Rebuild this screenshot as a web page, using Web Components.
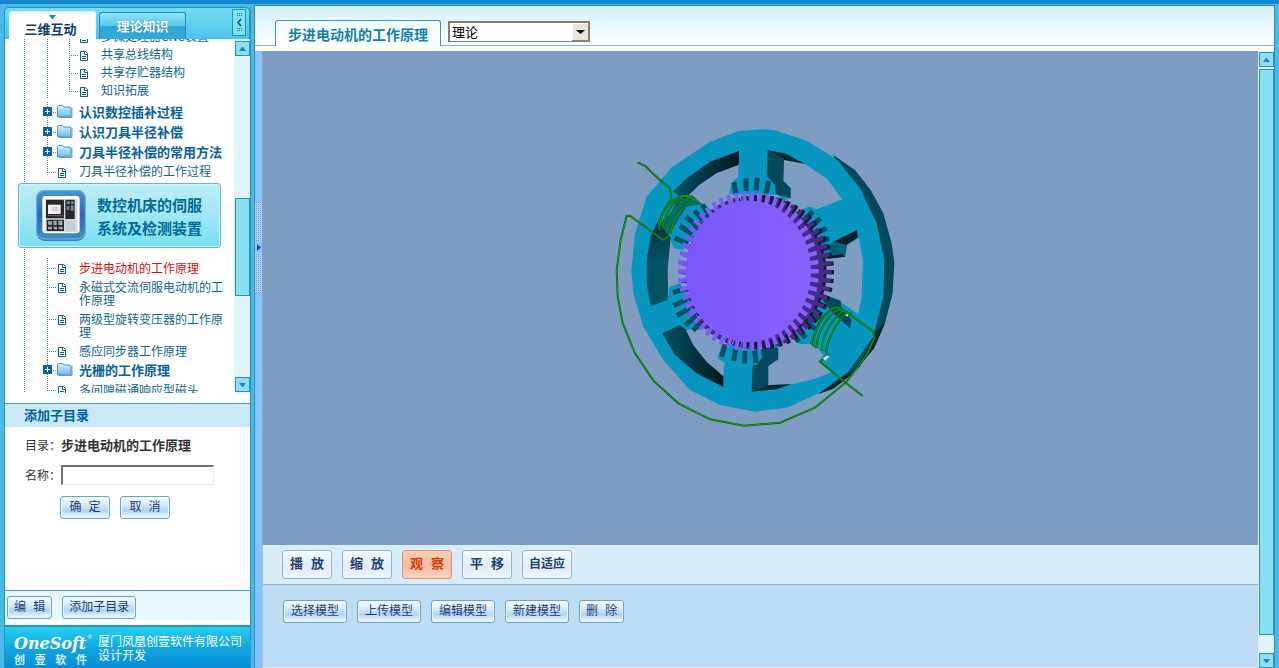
<!DOCTYPE html>
<html lang="zh-CN">
<head>
<meta charset="utf-8">
<title>步进电动机的工作原理</title>
<style>
html,body{margin:0;height:100%}
body{font:12px/18px "Noto Sans CJK SC",sans-serif;color:#333;overflow:hidden}
</style>
</head>
<body>
<app-shell></app-shell>
<script>
const define = (name, css, html, setup) => {
  const t = document.createElement('template');
  t.innerHTML = `<style>*{box-sizing:border-box}${css}</style>${html}`;
  customElements.define(name, class extends HTMLElement {
    constructor() {
      super();
      this.attachShadow({mode: 'open'}).append(t.content.cloneNode(true));
      if (setup) setup(this.shadowRoot, this);
    }
  });
};

/* ---------- buttons ---------- */
define('ui-button', `
:host{display:inline-flex}
button{flex:1;height:23px;padding:0 6px;border:1px solid #6aa9c4;border-radius:3px;cursor:pointer;
 font:12px/18px "Liberation Mono","Noto Sans CJK SC",sans-serif;color:#1f3f75;white-space:nowrap;
 background:linear-gradient(#fafdff 0,#d9ebfc 35%,#b0d3f8 65%,#d3e9fc 82%,#f6fcff 100%);box-shadow:inset 0 0 0 1px #e9f6ff}
:host([wide]) button{min-width:50px}
:host([model]) button{padding:0 7px}
:host([tool]) button{height:29px;width:50px;padding:0;font-size:13px;font-weight:bold;border-color:#94b4d3;
 background:linear-gradient(#f5faff,#e2ecf7 55%,#eef4fb);box-shadow:none}
:host([narrow]) button{font-size:12px}
:host([on]) button{color:#d83a08;border-color:#e09470;background:linear-gradient(#f8cdb8,#f4bda2 55%,#f8d2c0)}
`, `<button type="button"><slot></slot></button>`);

/* ---------- scroll rail ---------- */
define('scroll-rail', `
:host{display:flex;flex-direction:column;width:16px;background:#dff3f8;padding:2px 0 1px 1px;gap:2px}
button{flex:none;height:15px;width:15px;padding:0;border:1px solid #2b93bb;background:#8edff3;display:grid;place-items:center}
.track{flex:1;display:flex;flex-direction:column;width:15px}
.before{flex:var(--before,0)} .after{flex:var(--after,0)}
.thumb{flex:var(--thumb,1);border:1px solid #2b93bb;background:#8ae0f3}
`, `<button type="button" aria-label="向上"><svg width="7" height="4"><path d="M3 0h1l3 4H0z" fill="#1a86c0"/></svg></button>
<div class="track"><div class="before"></div><div class="thumb"></div><div class="after"></div></div>
<button type="button" aria-label="向下"><svg width="7" height="4"><path d="M0 0h7L4 4H3z" fill="#1a86c0"/></svg></button>`);

/* ---------- tree ---------- */
define('tree-group', `
:host{display:block;margin-left:42px}
:host([nested]){margin-left:0;padding-left:22px;
 background:repeating-linear-gradient(#3f8aa0 0 1px,transparent 1px 2px) 0 0/1px 100% no-repeat}
`, `<slot></slot>`);

define('tree-node', `
:host{display:block;position:relative;
 background:repeating-linear-gradient(#3f8aa0 0 1px,transparent 1px 2px) 0 0/1px 100% no-repeat,
 repeating-linear-gradient(90deg,#3f8aa0 0 1px,transparent 1px 2px) 0 10px/9px 1px no-repeat}
:host([last]){background-size:1px 11px,9px 1px}
a{display:flex;padding:3px 0 3px 10px;text-decoration:none;color:#12658c;line-height:var(--line,12px)}
.icon{flex:none;width:22px;height:12px}
.icon svg{display:block}
.text{max-width:147px}
.icon .folder,.plus{display:none}
:host([folder]) a{font-size:13px;font-weight:bold;line-height:14px;color:#0461a3}
:host([folder]) .icon .folder{display:block}
:host([folder]) .icon .doc{display:none}
:host([folder]) .plus{display:block;position:absolute;left:-4px;top:5px}
:host([current]) a{color:#cf1010}
`, `<a href="#"><svg class="plus" width="9" height="9"><path fill="#0b62a0" d="M0 0h9v9H0z"/><path fill="#fff" d="M4 2h1v5H4zM2 4h5v1H2z"/></svg>
<span class="icon"><svg class="doc" width="10" height="14"><path d="M1.500 3.500h5l2 2v7h-7z" fill="#f4fbfd" stroke="#0f5f80"/><path d="M5.500 3v3.500h3M3 8.500h4M3 10.500h4" fill="none" stroke="#0f5f80"/></svg>
<svg class="folder" width="16" height="14"><defs><linearGradient id="f" x2="0" y2="1"><stop stop-color="#d8f3ff"/><stop offset="1" stop-color="#6cb9ee"/></linearGradient></defs><path d="M2 12.500h13v-10" fill="none" stroke="#8f9fb0"/><path d="M.5 1.500l1-1h4l1.500 1.500h6l1 1v9H.5z" fill="url(#f)" stroke="#3f93c9"/></svg></span>
<span class="text"><slot></slot></span></a>`);

define('course-card', `
:host{display:block;position:relative}
a{display:flex;align-items:center;gap:11px;height:65px;margin:3px 0 0 13px;width:203px;padding-left:17px;
 border:1px solid #62b9cb;border-radius:3px;box-shadow:inset 0 0 0 1px #c9f4fb;text-decoration:none;
 color:#046a97;font-size:15px;font-weight:bold;line-height:23px;
 background:linear-gradient(#bdedf7,#a3e8f5 45%,#76e0f3)}
svg{flex:none}
`, `<a href="#"><svg width="50" height="51" viewBox="0 0 150 153">
<defs><linearGradient id="b" x2="0" y2="1"><stop stop-color="#4b95d2"/><stop offset=".5" stop-color="#2768b0"/><stop offset="1" stop-color="#3d8ccc"/></linearGradient></defs>
<rect x="1" y="3" width="148" height="149" rx="26" fill="#2b6399"/><rect x="2" y="1" width="146" height="146" rx="24" fill="url(#b)" stroke="#6aaade" stroke-width="4"/>
<rect x="19" y="18" width="112" height="112" rx="10" fill="#fdfdfd"/><path d="M28 28h96v98H28z" fill="#d6d9dc"/>
<path d="M30 29h54v56H30zM88 29h28v58H88zM32 89h52v34H32z" fill="#25292d"/>
<path d="M36 44h38v28H36z" fill="#f2f1f2"/><path d="M48 51h19v13H48z" fill="#dcc8d0"/><path d="M92 34h10v8H92zM105 34h8v8h-8zM92 48h8v12h-8zM104 46h9v16h-9z" fill="#777d83"/>
<path d="M36 94h12v10H36zM52 92h10v13H52zM67 92h12v13H67zM36 110h12v8H36zM53 110h10v8H53zM68 110h12v8H68z" fill="#a2a7ab"/><path d="M88 92h28v30H88z" fill="#c3ced8"/>
<path d="M36 77h44" stroke="#899" stroke-width="3" stroke-dasharray="4 3"/></svg>
<span><slot></slot></span></a>`);

define('course-tree', `
:host{display:flex;min-height:0;overflow:hidden;background:#fff;border-bottom:1px solid #4fa0bd;padding-bottom:10px}
nav{flex:1;min-width:0;overflow:hidden;
 background:repeating-linear-gradient(#3f8aa0 0 1px,transparent 1px 2px) 19px 0/1px 100% no-repeat}
.scrolled{margin-top:-12px}
.gap{margin-bottom:3px}
.next{margin-top:10px;--line:13px}
scroll-rail{--before:142;--thumb:97;--after:80}
`, `<nav aria-label="课程目录"><div class="scrolled">
<tree-group><tree-group nested class="gap">
<tree-node>多微处理器CNC装置</tree-node><tree-node>共享总线结构</tree-node><tree-node>共享存贮器结构</tree-node><tree-node last>知识拓展</tree-node></tree-group>
<tree-node folder>认识数控插补过程</tree-node><tree-node folder>认识刀具半径补偿</tree-node><tree-node folder>刀具半径补偿的常用方法</tree-node>
<tree-node last>刀具半径补偿的工作过程</tree-node></tree-group>
<course-card>数控机床的伺服<br>系统及检测装置</course-card>
<tree-group class="next"><tree-node current>步进电动机的工作原理</tree-node><tree-node>永磁式交流伺服电动机的工作原理</tree-node><tree-node>两级型旋转变压器的工作原理</tree-node><tree-node>感应同步器工作原理</tree-node><tree-node folder>光栅的工作原理</tree-node><tree-node last>多间隙磁通响应型磁头</tree-node></tree-group>
</div></nav><scroll-rail></scroll-rail>`);

/* ---------- sidebar ---------- */
define('side-tabs', `
:host{display:flex;align-items:flex-end;height:32px;padding:0 3px 0 4px;gap:3px;border:1px solid #2097be;border-bottom:0;
 border-radius:5px 5px 0 0;background:linear-gradient(#74dcf2,#4cc3ea)}
button{border:1px solid #1d8fc0;border-bottom:0;border-radius:3px 3px 0 0;padding:0;width:87px;font:bold 13px/18px "Noto Sans CJK SC",sans-serif;color:#fff}
.on{position:relative;height:28px;background:#fff;color:#123f66;padding:6px 4px 0 0;border-color:#e6fbff}
.on svg{position:absolute;left:39px;top:3px}
.off{height:27px;background:linear-gradient(#8ee5f5 0,#5bcbe9 48%,#2fa7d6 52%,#35a9da);text-shadow:0 0 1px #0a6c9c}
.fold{margin:0 0 3px auto;width:14px;height:27px;border:1px solid #2392c0;border-radius:0;background:#7de0f5}
.fold svg{display:block}
`, `<button class="on" type="button"><svg width="7" height="4"><path d="M0 0h7L4 4H3z" fill="#2389c4"/></svg>三维互动</button>
<button class="off" type="button">理论知识</button>
<button class="fold" type="button" aria-label="收起"><svg width="12" height="25"><path d="M8 9l-3 3.500 3 3.500" fill="none" stroke="#174f78" stroke-width="1.500"/><path d="M4 3.500h5M4 5.500h5M4 18.500h5M4 20.500h5" stroke="#1b6d98" stroke-dasharray="1 1"/></svg></button>`);

define('add-form', `
:host{display:flex;flex-direction:column;background:#fff}
h2{margin:0;height:23px;padding-left:19px;font:bold 13px/22px "Noto Sans CJK SC",sans-serif;color:#0461a3;background:#c9e9f8}
form{min-height:163px;padding:8px 20px}
p{display:flex;align-items:center;margin:0;height:20px}
b{font-size:13px}
.name{margin-top:10px}
input{width:153px;height:20px;padding:0 3px;border:2px solid;border-color:#77736b #eeebe4 #eeebe4 #77736b;border-width:2px 1px 1px 2px;background:#fff;font:12px "Noto Sans CJK SC",sans-serif}
.row{display:flex;gap:10px;padding:11px 0 0 35px}
.bar{height:35px;padding:5px 2px 0;display:flex;gap:10px;border-top:1px solid #4fa0bd;background:linear-gradient(#e9f8fe 29px,#fff 29px)}
`, `<h2>添加子目录</h2><form><p>目录：<b>步进电动机的工作原理</b></p>
<p class="name"><label for="n">名称：</label><input id="n" type="text"></p>
<div class="row"><ui-button wide>确 定</ui-button><ui-button wide>取 消</ui-button></div></form>
<div class="bar"><ui-button>编 辑</ui-button><ui-button>添加子目录</ui-button></div>`);

define('brand-footer', `
:host{display:flex;gap:11px;height:43px;padding:7px 0 0 9px;border-top:2px solid #1b95c4;background:linear-gradient(#28cdf0,#10a5e0 55%,#0a8cd8);color:#fff}
.logo{position:relative;width:73px}
.logo b{display:block;font:italic bold 16px/19px "DejaVu Serif","Liberation Serif",serif;white-space:nowrap}
.logo small{display:block;font:bold 11px/13px "Noto Sans CJK SC",sans-serif;text-align-last:justify;color:#d4f2ff}
sup{position:absolute;right:-5px;top:0;font:6px/6px "Liberation Sans",sans-serif}
p{margin:0;font-size:12px;line-height:14px}
`, `<div class="logo"><b>OneSoft</b><sup>®</sup><small>创 壹 软 件</small></div><p>厦门凤凰创壹软件有限公司<br>设计开发</p>`);

define('side-bar', `
:host{display:flex;flex-direction:column;width:247px;flex:none;margin-top:2px}
.panel{flex:1;min-height:0;display:flex;flex-direction:column;border-left:1px solid #2097be}
course-tree{flex:1}
`, `<side-tabs></side-tabs><div class="panel"><course-tree></course-tree><add-form></add-form><brand-footer></brand-footer></div>`);

/* ---------- drawing of the stepper motor ---------- */
const P = (d, f) => `<polygon points="${d}" fill="${f}"/>`;
const gear = (cx, cy, rx, ry, k, n, fill) => {
  let pts = [];
  for (let i = 0; i < n; i++) {
    [[-.48, k], [-.27, k], [-.25, 1], [.23, 1], [.25, k]].forEach(([o, s]) => {
      const a = (i + o) / n * Math.PI * 2;
      pts.push(`${(cx + Math.cos(a) * rx * s).toFixed(1)},${(cy + Math.sin(a) * ry * s).toFixed(1)}`);
    });
  }
  return P(pts.join(' '), fill);
};
const slots = list => list.map(([x, y, l = 19]) => {
  const dx = 445 - x, dy = 485 - y, r = Math.hypot(dx, dy), ux = dx / r * l, uy = dy / r * l;
  return `<path d="M${x - ux} ${y - uy}L${x + ux} ${y + uy}" stroke="#045061" stroke-width="15"/>`;
}).join('');
const BG = '#7f9dc2', CY = '#0796c0', DK = '#04495b', BK = '#02262f';
const coil = (d, w = 4) => `<path d="${d}" fill="none" stroke="#08620e" stroke-width="${w + 2}"/><path d="${d}" fill="none" stroke="#1c9a22" stroke-width="${w - 1}"/>`;

define('motor-view', `
:host{display:flex;justify-content:center;align-items:center;background:#7f9dc2;overflow:hidden}
svg{flex:none}
`, `<svg width="320" height="376" viewBox="0 0 960 1128" role="img" aria-label="步进电动机模型">
<defs><linearGradient id="w" x1="0" x2="1"><stop stop-color="#045365"/><stop offset="1" stop-color="#011820"/></linearGradient>
<linearGradient id="w2" x1="0" x2="0" y1="0" y2="1"><stop stop-color="#023542"/><stop offset=".5" stop-color="#045365"/></linearGradient>
<linearGradient id="p"><stop stop-color="#7b56fb"/><stop offset="1" stop-color="#8863ff"/></linearGradient></defs>
${P('700,135 765,180 812,240 850,310 875,400 883,460 878,550 855,640 822,715 760,790 700,835 655,852 740,700 780,400', DK)}
${P('780,770 725,800 655,852 700,836 760,790 822,715 855,640 820,670', BK)}
${P('415,63 490,58 522,60 620,92 710,148 780,235 830,340 853,450 850,560 820,680 745,785 660,848 560,893 465,905 360,885 270,840 190,750 130,650 100,550 94,480 105,370 140,260 215,172 330,95', CY)}
${P('218,245 260,205 330,155 417,123 417,166 350,190 298,225 255,268', 'url(#w)')}
${P('417,164 350,190 298,225 262,260 320,290 350,330 500,300 560,280 525,245 510,205 398,213 415,200', BG)}
${P('415,160 505,160 512,208 392,222 415,200', CY)}
${P('503,121 555,130 615,162 550,152 545,215', BK)}
${P('552,150 615,162 680,205 727,268 650,298 625,290 600,310 540,280 572,262 572,235 550,215', BG)}
${P('503,121 552,145 550,212 572,235 572,265 515,250 500,190', DK)}
${P('777,385 788,450 785,560 775,612 720,575 655,560 640,480 690,440 735,440 740,405', BG)}
${P('700,395 737,408 742,400 735,440 680,446', '#036177')}${P('700,395 770,360 774,382 738,406', '#012028')}${P('676,440 688,446 735,440 725,432', BK)}
${P('172,335 214,385 206,450 203,570 152,589 140,520 140,450 152,380', 'url(#w2)')}
${P('212,385 300,400 300,560 205,562 203,480', BG)}
${P('186,670 238,646 262,660 280,705 320,755 370,798 370,831 290,790 225,735', 'url(#w)')}
${P('258,661 340,640 430,700 372,765 370,798 320,755 280,705', BG)}
${P('500,740 570,680 600,700 640,698 670,735 656,755 693,787 650,805 570,824 500,832', BG)}
${P('455,845 458,770 490,710 535,714 535,748 505,768 505,832', DK)}${P('455,845 510,825 575,822 530,838', BK)}
${P('388,252 392,228 415,207 505,203 525,225 528,255', CY)}
${P('222,415 212,390 225,350 275,285 305,278 335,300 260,370 250,420', CY)}
${P('205,560 208,530 240,520 270,560 310,640 300,660 260,655 220,610', CY)}
${P('352,745 365,705 385,700 480,715 488,740 470,765 385,765', CY)}
${P('605,320 612,295 635,290 690,380 680,435 665,440 640,400', CY)}
${P('640,590 660,560 690,570 700,610 650,700 600,703 575,685', CY)}
${P('690,560 722,572 724,590 755,630 750,655 700,610 660,562', DK)}
${slots([[405,235],[438,224],[470,222],[502,232],[318,300],[296,316],[276,336,24],[258,360,22],[244,393,22],[238,542,20],[240,578,22],[250,605,22],[272,632,22],[292,648],[370,722],[404,734],[434,742],[466,740],[490,722],[625,318],[645,338,22],[660,365,22],[670,392],[680,415],[662,585],[640,612,26],[626,640,26],[600,664,26],[586,680]])}
${gear(478,487,224,232,.90,54,'#22133d')}
${gear(468,486,226,232,.90,54,'#422c86')}
${gear(445,484,211,239,.89,54,'url(#p)')}
${P('215,305 235,262 278,255 305,282 260,290 200,385 175,350', 'rgba(1,54,40,.45)')}
${coil('M113 157L138 170 172 203 210 235 214 265 188 308 176 338 180 360')}
${coil('M188 355C195 305 225 265 262 256L280 270M200 368C205 315 232 278 272 260L292 276M212 372C215 330 242 290 282 268L304 285M180 345C184 300 212 268 250 256L270 262')}
${coil('M206 378L190 390 90 317 80 318 62 390 50 480 53 560 68 640 105 730 160 812 235 880 330 928 432 947 540 938 645 893 740 815 800 735 823 685 820 664 750 615 715 592 695 595 660 630 634 700 650 714')}
${coil('M650 712C650 670 680 620 715 598L730 600M665 722C664 680 695 628 728 603L742 607M678 732C680 690 710 636 740 608L755 612M640 708C640 665 665 615 700 595')}
${coil('M684 733L660 755 735 817 788 858')}
${P('668,745 680,736 688,740 676,752', '#c5d7dc')}${P('735,615 745,612 742,620', '#eee')}
</svg>`);

/* ---------- main area ---------- */
define('title-bar', `
:host{display:flex;align-items:flex-end;height:45px;padding-bottom:5px;background:linear-gradient(#d3f1fc,#fff 40px);position:relative}
:host::after{content:"";position:absolute;left:0;right:0;bottom:5px;height:1px;background:#7db8d4}
h1{position:relative;z-index:1;margin:0 7px 0 20px;height:26px;padding:0 12px;border:1px solid #3da0a8;border-bottom:0;border-radius:3px 3px 0 0;
 background:linear-gradient(#edfdfd,#fff);font:bold 14px/26px "Noto Sans CJK SC",sans-serif;color:#1580ae}
.pick{position:relative;width:142px;height:21px;margin-bottom:4px;border:2px solid #807d75;border-right-width:1px;border-bottom-width:1px;background:#fff}
select{appearance:none;width:100%;height:100%;display:block;border:0;padding:0 20px 0 2px;background:#fff;color:#000;font:13px/18px "Noto Sans CJK SC",sans-serif}
svg{position:absolute;right:0;top:0;pointer-events:none}
`, `<h1>步进电动机的工作原理</h1><div class="pick"><select aria-label="类型"><option>理论</option></select>
<svg width="17" height="18"><path d="M0 0h17v18H0z" fill="#e9e5d8"/><path d="M.5 17.500V.5h16" fill="none" stroke="#fff"/><path d="M16.500 0v17.500H0" fill="none" stroke="#8a8678"/><path d="M4 7h9l-4.500 4z"/></svg></div>`);

define('split-handle', `
:host{display:flex;width:7px;flex:none;align-items:flex-start;padding-top:151px;background:#88c3f9}
button{width:7px;height:91px;padding:0;border:0;background:conic-gradient(#6ba0d8 25%,#aed3f8 0) 0 0/2px 2px;display:grid;place-items:center}
span{width:7px;height:11px;background:#8fc6fa;display:grid;place-items:center}
`, `<button type="button" aria-label="调整宽度"><span><svg width="4" height="7"><path d="M0 0l4 3.500L0 7z" fill="#1441d4"/></svg></span></button>`);

define('tool-bars', `
:host{display:block;background:#bfdcf5;height:123px;border-left:1px solid #9ac5ee;border-bottom:1px solid #dceefa}
div{display:flex;gap:10px}
.a{height:40px;padding:5px 19px;background:#d9ecf9;border-bottom:1px solid #8ab4da}
.b{padding:15px 20px}
`, `<div class="a"><ui-button tool>播 放</ui-button><ui-button tool>缩 放</ui-button><ui-button tool on>观 察</ui-button><ui-button tool>平 移</ui-button><ui-button tool narrow>自适应</ui-button></div>
<div class="b"><ui-button model>选择模型</ui-button><ui-button model>上传模型</ui-button><ui-button model>编辑模型</ui-button><ui-button model>新建模型</ui-button><ui-button>删 除</ui-button></div>`);

define('main-area', `
:host{display:flex;flex-direction:column;flex:1;min-width:0;border:1px solid #2a93bd;border-width:1px 1px 0;background:#fff}
.body{flex:1;min-height:0;display:flex}
.stage{flex:1;min-width:0;display:flex;flex-direction:column}
motor-view{flex:1;min-height:0}
scroll-rail{--before:0;--thumb:567;--after:16;padding-top:1px;padding-bottom:0}
`, `<title-bar></title-bar><div class="body"><split-handle></split-handle><div class="stage"><motor-view></motor-view><tool-bars></tool-bars></div><scroll-rail></scroll-rail></div>`);

define('app-shell', `
:host{box-sizing:border-box;display:flex;height:100vh;padding-top:5px;border:solid #4bb9e6;border-width:0 4px 0 4px;background:#4bb9e6;position:relative}
:host::before{content:"";position:absolute;left:-4px;right:-4px;top:0;height:4px;background:#1486cf}
main-area{margin-left:3px}
side-bar{border-right:1px solid #2a93bd}
`, `<side-bar></side-bar><main-area></main-area>`);
</script>
</body>
</html>
